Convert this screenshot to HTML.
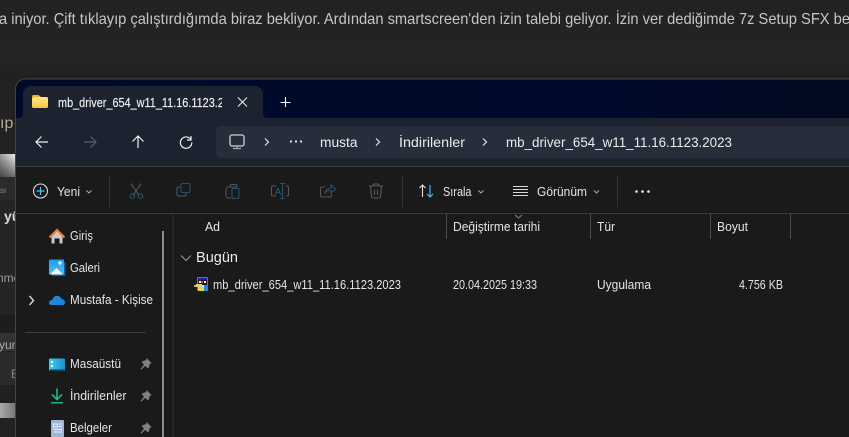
<!DOCTYPE html>
<html><head><meta charset="utf-8"><style>
html,body{margin:0;padding:0;background:#222;width:849px;height:437px;overflow:hidden}
svg{display:block}
text{font-family:"Liberation Sans",sans-serif;font-size:12.5px;fill:#e4e4e4}
</style></head><body>
<svg width="849" height="437" viewBox="0 0 849 437" xmlns="http://www.w3.org/2000/svg">
<defs>
<linearGradient id="bg" x1="0" y1="0" x2="0" y2="1"><stop offset="0" stop-color="#222"/><stop offset=".8" stop-color="#242424"/><stop offset="1" stop-color="#1f1f1f"/></linearGradient>
<linearGradient id="wh" x1="0" y1="0" x2="1" y2="0"><stop offset="0" stop-color="#999"/><stop offset="1" stop-color="#f0f0f0"/></linearGradient>
<linearGradient id="wv" x1="0" y1="0" x2="0" y2="1"><stop offset="0" stop-color="#000" stop-opacity="0"/><stop offset="1" stop-color="#000" stop-opacity=".55"/></linearGradient>
<linearGradient id="gr" x1="0" y1="0" x2="1" y2="0"><stop offset="0" stop-color="#aaa"/><stop offset="1" stop-color="#777"/></linearGradient>
<linearGradient id="fold" x1="0" y1="0" x2="0" y2="1"><stop offset="0" stop-color="#ffe38a"/><stop offset="1" stop-color="#f7c93e"/></linearGradient>
<linearGradient id="tb" x1="0" y1="0" x2="1" y2="0"><stop offset="0" stop-color="#000a28"/><stop offset=".7" stop-color="#000a2c"/><stop offset="1" stop-color="#010a1e"/></linearGradient>
<linearGradient id="gal" x1="0" y1="0" x2="0" y2="1"><stop offset="0" stop-color="#1c9cf0"/><stop offset="1" stop-color="#56bdf5"/></linearGradient>
<linearGradient id="dsk" x1="0" y1="0" x2="1" y2="0"><stop offset="0" stop-color="#3dd0ee"/><stop offset="1" stop-color="#1f8fd0"/></linearGradient>
<clipPath id="tabclip"><rect x="56" y="90" width="166" height="24"/></clipPath>
</defs>
<rect width="849" height="437" fill="#222"/>
<rect width="849" height="78" fill="url(#bg)"/>
<text x="-1" y="24" style="font-size:16px;fill:#c3c6c8" textLength="851" lengthAdjust="spacingAndGlyphs">a iniyor. Çift tıklayıp çalıştırdığımda biraz bekliyor. Ardından smartscreen'den izin talebi geliyor. İzin ver dediğimde 7z Setup SFX be</text>

<!-- left strip behind window -->
<text x="0" y="128" style="font-size:16px;fill:#b4aa9c">ıp</text>
<rect x="0" y="154" width="15" height="23" fill="url(#wh)"/>
<rect x="0" y="154" width="15" height="23" fill="url(#wv)"/>
<rect x="0" y="177" width="15" height="23" fill="#2b2b2b"/>
<text x="0" y="193" style="font-size:8px;fill:#888">sı</text>
<rect x="0" y="200" width="15" height="115" fill="#252525"/>
<text x="4" y="221" style="font-size:14px;font-weight:bold;fill:#d8d8d8">yü</text>
<text x="-3" y="282" style="font-size:12px;fill:#999">nme</text>
<rect x="0" y="315" width="15" height="18" fill="#1d1d1d"/>
<rect x="0" y="333" width="15" height="18" fill="#333"/>
<text x="-1" y="349" style="font-size:12px;fill:#aaa">yun</text>
<rect x="0" y="352" width="15" height="33" fill="#2b2b2b"/>
<text x="11" y="378" style="font-size:12px;fill:#888">E</text>
<rect x="0" y="385" width="15" height="18" fill="#202020"/>
<rect x="0" y="403" width="15" height="15" fill="url(#gr)"/>
<rect x="0" y="418" width="15" height="19" fill="#222"/>

<!-- window -->
<path d="M15.500 445V89a10 10 0 0 1 10-10H855V445Z" fill="#1a1a1a" stroke="#444"/>
<path d="M16 118V89a9.500 9.500 0 0 1 9.500-9.500H849V118Z" fill="url(#tb)"/>
<path d="M16 118H849V166H16Z" fill="#1c2230"/>
<path d="M17 118c4 0 6-1 6-5V94a8 8 0 0 1 8-8H255a8 8 0 0 1 8 8V113c0 4 2 5 6 5Z" fill="#1c2230"/>
<rect x="216" y="126" width="640" height="32" rx="5" fill="#272d3b"/>
<rect x="16" y="166" width="833" height="1" fill="#3d3d3d"/>
<rect x="16" y="167" width="833" height="46" fill="#1a1a1a"/>
<rect x="16" y="213" width="833" height="1" fill="#3a3a3a"/>

<!-- folder tab icon -->
<path d="M32 96.500a1.500 1.500 0 0 1 1.500-1.500h5l2.500 2h-9Z" fill="#f0b429"/>
<rect x="32" y="97" width="16" height="11" rx="1.500" fill="url(#fold)"/>
<g clip-path="url(#tabclip)"><text x="58" y="107" style="font-size:13px;font-weight:500;fill:#f2f2f2;stroke:#f2f2f2;stroke-width:.15" textLength="184" lengthAdjust="spacingAndGlyphs">mb_driver_654_w11_11.16.1123.2023</text></g>
<path d="M238 97.500l9 9M247 97.500l-9 9" stroke="#e8e8e8" stroke-width="1.100" fill="none"/>
<path d="M285.500 97v10M280.500 102.500h10" stroke="#f0f0f0" stroke-width="1.100" fill="none"/>

<!-- nav icons -->
<path d="M48 142H36M41.500 136.500 36 142l5.500 5.500" stroke="#efefef" stroke-width="1.200" fill="none"/>
<path d="M96 142H84M90.500 136.500 96 142l-5.500 5.500" stroke="#5c5f66" stroke-width="1.200" fill="none"/>
<path d="M138 148V136M132.500 141.500 138 136l5.500 5.500" stroke="#efefef" stroke-width="1.200" fill="none"/>
<path d="M190.500 139a5.700 5.700 0 1 0 1.300 3.500M191 136v4h-4" stroke="#efefef" stroke-width="1.200" fill="none"/>
<rect x="230" y="135" width="14" height="11" rx="2" fill="none" stroke="#d0d0d0" stroke-width="1.300"/>
<path d="M237 146v2M233 148.500h8" stroke="#a8a8a8" stroke-width="1.200" fill="none"/>
<path d="M265 138.500l3.500 3.500-3.500 3.500" stroke="#e6e6e6" stroke-width="1.200" fill="none"/>
<circle cx="291" cy="141.500" r="1.100" fill="#e6e6e6"/><circle cx="296" cy="141.500" r="1.100" fill="#e6e6e6"/><circle cx="301" cy="141.500" r="1.100" fill="#e6e6e6"/>
<text x="320" y="147" style="font-size:13.500px;fill:#ececec" textLength="37.500" lengthAdjust="spacingAndGlyphs">musta</text>
<path d="M376 138.500l3.500 3.500-3.500 3.500" stroke="#e6e6e6" stroke-width="1.200" fill="none"/>
<text x="399" y="147" style="font-size:13.500px;fill:#ececec" textLength="66" lengthAdjust="spacingAndGlyphs">İndirilenler</text>
<path d="M483 138.500l3.500 3.500-3.500 3.500" stroke="#e6e6e6" stroke-width="1.200" fill="none"/>
<text x="506" y="147" style="font-size:13.500px;fill:#ececec" textLength="226" lengthAdjust="spacingAndGlyphs">mb_driver_654_w11_11.16.1123.2023</text>

<!-- toolbar -->
<circle cx="40.500" cy="191" r="7" fill="none" stroke="#d8d8d8" stroke-width="1.100"/>
<path d="M40.500 187v8M36.500 191h8" stroke="#4cc2ff" stroke-width="1.200" fill="none"/>
<text x="57" y="196" fill="#ddd" textLength="23" lengthAdjust="spacingAndGlyphs">Yeni</text>
<path d="M86.500 190.500l2.500 2.500 2.500-2.500" stroke="#aaa" fill="none"/>
<rect x="109" y="175" width="1" height="32" fill="#333"/>
<g fill="none" stroke-width="1.100">
<path d="M131 183.500l8 12M141 183.500l-8 12" stroke="#5a5a5a"/>
<circle cx="132.500" cy="196" r="2.300" stroke="#27506c"/><circle cx="140.500" cy="196" r="2.300" stroke="#27506c"/>
<path d="M180 187h-1.500a1.500 1.500 0 0 0-1.500 1.500v6a1.500 1.500 0 0 0 1.500 1.500h6a1.500 1.500 0 0 0 1.500-1.500V193" stroke="#555"/>
<rect x="181" y="183.500" width="9" height="9" rx="1.500" stroke="#27506c"/>
<path d="M231 187h-3a2 2 0 0 0-2 2v7a2 2 0 0 0 2 2h3M237 187v-1a1.500 1.500 0 0 0-1.500-1.500h-4A1.500 1.500 0 0 0 230 186v1Z" stroke="#555"/>
<rect x="232" y="188.500" width="7" height="10" rx="1.500" stroke="#27506c"/>
<path d="M276 186h-3a1.500 1.500 0 0 0-1.500 1.500v7A1.500 1.500 0 0 0 273 196h3M286 186h1a1.500 1.500 0 0 1 1.500 1.500v7A1.500 1.500 0 0 1 287 196h-1" stroke="#555"/>
<path d="M280 183.500h5M280 198.500h5M282.500 183.500v15" stroke="#27506c"/>
<path d="M325 187h-3a1.500 1.500 0 0 0-1.500 1.500v7A1.500 1.500 0 0 0 322 197h8a1.500 1.500 0 0 0 1.500-1.500V194" stroke="#555"/>
<path d="M325 193c.5-3 3-5 6-5v-3l4.500 4-4.500 4v-2.500c-2 0-4.500.8-6 2.500Z" stroke="#27506c"/>
<path d="M369 186h14M373 186l.5-2h5l.5 2M370.500 186l1 11a1.500 1.500 0 0 0 1.500 1h6a1.500 1.500 0 0 0 1.500-1l1-11M374.500 189.500v5.500M377.500 189.500v5.500" stroke="#5a5a5a"/>
</g>
<text x="275" y="194.500" style="font-size:9px;fill:#2f6488">A</text>
<rect x="402" y="175" width="1" height="32" fill="#333"/>
<path d="M422.500 197v-12M419.500 188l3-3 3 3" stroke="#e0e0e0" stroke-width="1.100" fill="none"/>
<path d="M430 185v12M427 194l3 3 3-3" stroke="#4cc2ff" stroke-width="1.100" fill="none"/>
<text x="443" y="196" fill="#ddd" textLength="28.500" lengthAdjust="spacingAndGlyphs">Sırala</text>
<path d="M478.500 190.500l2.500 2.500 2.500-2.500" stroke="#aaa" fill="none"/>
<path d="M513 186.500h15M513 189.500h15M513 192.500h15M513 195.500h15" stroke="#d8d8d8" fill="none"/>
<text x="537" y="196" fill="#ddd" textLength="50" lengthAdjust="spacingAndGlyphs">Görünüm</text>
<path d="M594 190.500l2.500 2.500 2.500-2.500" stroke="#aaa" fill="none"/>
<rect x="617" y="175" width="1" height="32" fill="#333"/>
<circle cx="636.500" cy="191.500" r="1.300" fill="#eee"/><circle cx="642.500" cy="191.500" r="1.300" fill="#eee"/><circle cx="648.500" cy="191.500" r="1.300" fill="#eee"/>

<!-- sidebar -->
<rect x="172" y="214" width="2" height="223" fill="#252525"/>
<rect x="162" y="231" width="2" height="206" fill="#8e8e8e"/>
<path d="M51.500 236.500 57 231l5.500 5.500V243.500H59.500V238.500h-5v5H51.500Z" fill="#cfc9c4"/>
<path d="M49.500 237.500 57 230l7.500 7.500" fill="none" stroke="#e5803a" stroke-width="2.200"/>
<text x="70" y="240" textLength="23" lengthAdjust="spacingAndGlyphs">Giriş</text>
<path d="M64 262h1.500v13a1 1 0 0 1-1 1H52v-1.500h12Z" fill="#145f9e"/>
<rect x="49" y="259.500" width="15" height="15" rx="1" fill="url(#gal)"/>
<path d="M50 274.500l6.500-6.500 6.500 6.500Z" fill="#f2f8fc"/><circle cx="60" cy="263" r="1.700" fill="#e8f4fc"/>
<text x="70" y="272" textLength="30" lengthAdjust="spacingAndGlyphs">Galeri</text>
<path d="M29.500 296l4 4.500-4 4.500" stroke="#d8d8d8" stroke-width="1.400" fill="none"/>
<path d="M49 303.500c0-2.500 1.500-3.500 3.500-4 1-3 3.500-4.500 6-3.500 1.500.5 2.500 1.500 3 3 2.500 0 3.500 2 3.500 3.500 0 1.500-1 2.500-2 2.500H52c-2 0-3-.5-3-1.500Z" fill="#1a86dc"/>
<text x="70" y="304" textLength="83" lengthAdjust="spacingAndGlyphs">Mustafa - Kişise</text>
<rect x="25" y="332" width="121" height="1" fill="#3c3c3c"/>
<rect x="49" y="358.500" width="16" height="12" rx="1" fill="url(#dsk)"/>
<rect x="50" y="369" width="14" height="1.500" fill="#14699c"/>
<rect x="51" y="361" width="2" height="2" fill="#e8fbff"/><rect x="51" y="365" width="2" height="2" fill="#e8fbff"/>
<text x="70" y="368" textLength="51" lengthAdjust="spacingAndGlyphs">Masaüstü</text>
<path d="M57 388.500v11M52 394.500l5 5 5-5" stroke="#22b28c" stroke-width="1.600" fill="none"/>
<rect x="51" y="402" width="12" height="1.500" fill="#22b28c"/>
<text x="70" y="400" textLength="56.500" lengthAdjust="spacingAndGlyphs">İndirilenler</text>
<rect x="51" y="420" width="13" height="17" rx="1" fill="#9fb6d4"/>
<path d="M53.500 424h4v3h-4ZM59 424h3M59 426.500h3M53.500 429.500h8.500M53.500 432h8.500" stroke="#eef3f9" fill="none"/>
<text x="70" y="432" textLength="42" lengthAdjust="spacingAndGlyphs">Belgeler</text>
<g fill="#7f7f7f">
<path d="M146.500 358l5 5-1.800 1-.7 3.200-1.200 1.200-2.500-2.500-4 3.600-.8-.8 3.600-4-2.500-2.500 1.200-1.200 3.200-.7Z"/>
<path d="M146.500 390l5 5-1.800 1-.7 3.200-1.200 1.200-2.500-2.500-4 3.600-.8-.8 3.600-4-2.500-2.500 1.200-1.200 3.200-.7Z"/>
<path d="M146.500 422l5 5-1.800 1-.7 3.200-1.200 1.200-2.500-2.500-4 3.600-.8-.8 3.600-4-2.500-2.500 1.200-1.200 3.200-.7Z"/>
</g>

<!-- column headers -->
<text x="205" y="231" fill="#d8d8d8" textLength="15" lengthAdjust="spacingAndGlyphs">Ad</text>
<g fill="#4c4c4c"><rect x="446" y="214" width="1" height="25"/><rect x="590" y="214" width="1" height="25"/><rect x="710" y="214" width="1" height="25"/><rect x="790" y="214" width="1" height="25"/></g>
<path d="M515 215l3.500 3 3.500-3" stroke="#888" fill="none"/>
<text x="453" y="231" fill="#d8d8d8" textLength="87" lengthAdjust="spacingAndGlyphs">Değiştirme tarihi</text>
<text x="597" y="231" fill="#d8d8d8" textLength="18" lengthAdjust="spacingAndGlyphs">Tür</text>
<text x="717" y="231" fill="#d8d8d8" textLength="31" lengthAdjust="spacingAndGlyphs">Boyut</text>

<!-- group -->
<path d="M181 255.500l5 5 5-5" stroke="#999" fill="none"/>
<text x="196" y="262" style="font-size:15px;fill:#ececec" textLength="42" lengthAdjust="spacingAndGlyphs">Bugün</text>

<!-- file row -->
<rect x="197.500" y="277.500" width="10" height="13" fill="#d8d8d8"/>
<rect x="198" y="278" width="9" height="11" fill="#15152a"/>
<rect x="198" y="278" width="9" height="2" fill="#2222a0"/>
<rect x="199" y="281" width="2" height="2" fill="#f0f0f0"/><rect x="201" y="281" width="2" height="2" fill="#d83a3a"/><rect x="204" y="281" width="2" height="2" fill="#f0f0f0"/>
<rect x="198" y="285" width="9" height="2" fill="#dcdcdc"/>
<rect x="196" y="284" width="6" height="3" fill="#d8cf7a"/>
<rect x="194" y="285" width="2" height="2" fill="#b8b27a"/>
<rect x="198" y="287" width="6" height="4" fill="#e6d23e"/>
<rect x="204" y="285" width="4" height="6" fill="#2a84d8"/>
<text x="213" y="289" textLength="188" lengthAdjust="spacingAndGlyphs">mb_driver_654_w11_11.16.1123.2023</text>
<text x="453" y="289" fill="#dcdcdc" textLength="84" lengthAdjust="spacingAndGlyphs">20.04.2025 19:33</text>
<text x="597" y="289" fill="#dcdcdc" textLength="54" lengthAdjust="spacingAndGlyphs">Uygulama</text>
<text x="739" y="289" fill="#dcdcdc" textLength="44" lengthAdjust="spacingAndGlyphs">4.756 KB</text>
</svg>
</body></html>
